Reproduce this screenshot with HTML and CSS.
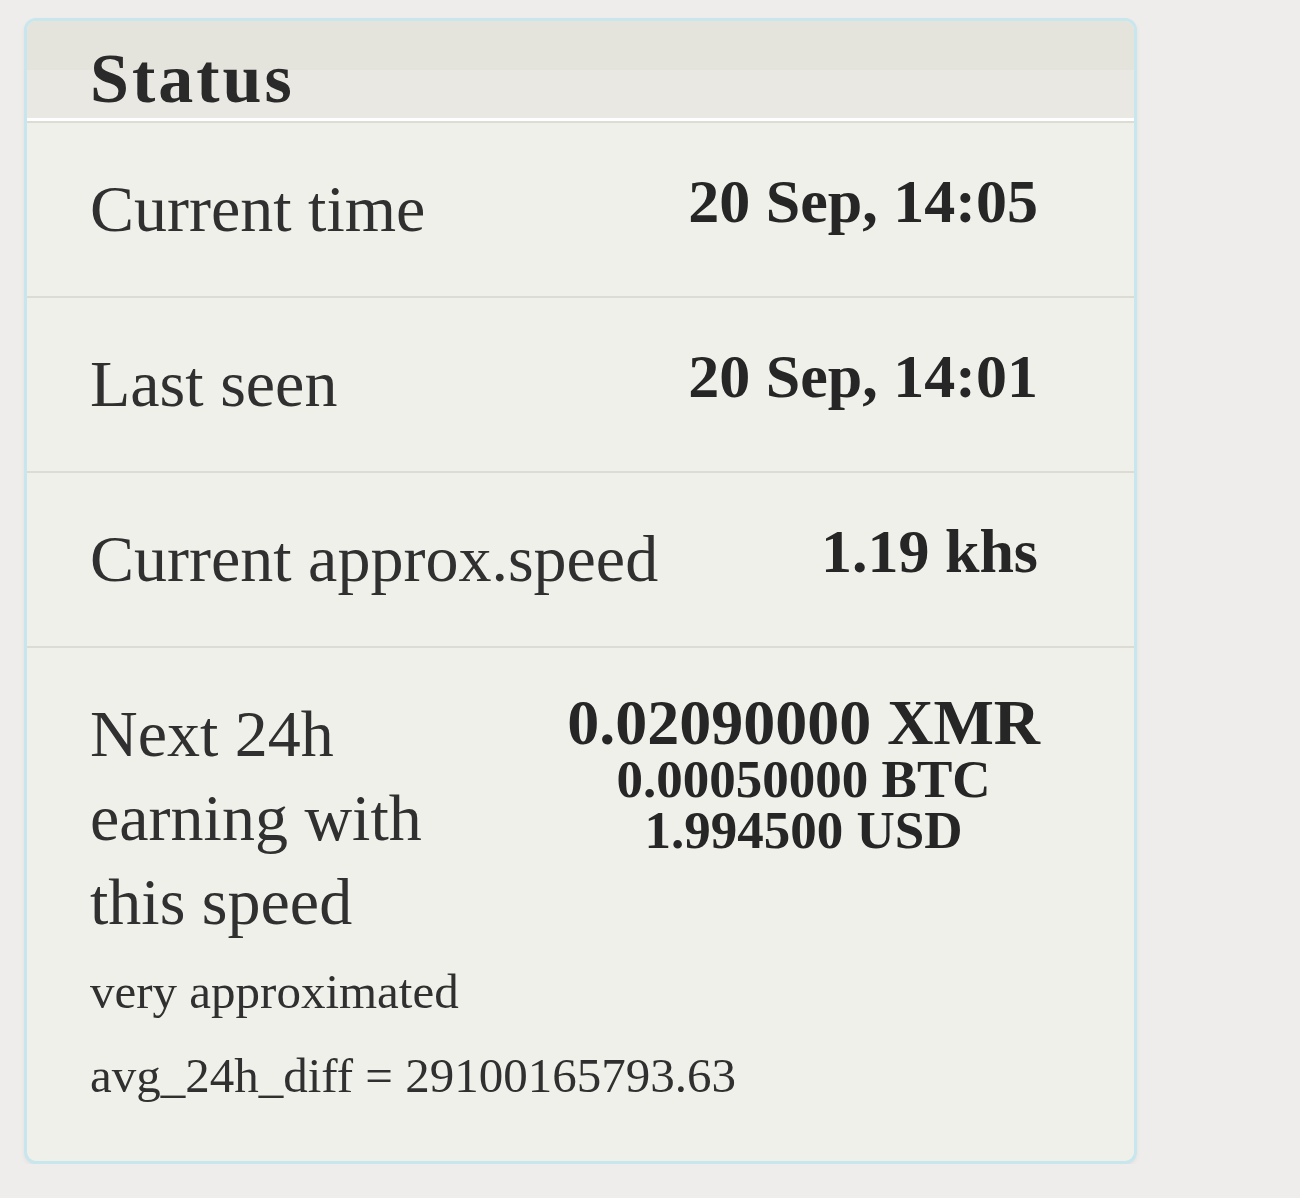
FILE: index.html
```html
<!DOCTYPE html>
<html>
<head>
<meta charset="utf-8">
<link rel="stylesheet" href="styles.css">
</head>
<body>
<div class="card">
  <div class="card-head">Status</div>
  <div class="row">
    <div class="label">Current time</div>
    <div class="value">20 Sep, 14:05</div>
  </div>
  <div class="row">
    <div class="label">Last seen</div>
    <div class="value">20 Sep, 14:01</div>
  </div>
  <div class="row">
    <div class="label">Current approx.speed</div>
    <div class="value">1.19 khs</div>
  </div>
  <div class="row row-last">
    <div class="label label-wide">
      <div class="wrap">Next 24h earning with this speed</div>
      <div class="small first">very approximated</div>
      <div class="small">avg_24h_diff = 29100165793.63</div>
    </div>
    <div class="value">
      <div class="earn">
        <div class="xmr">0.02090000 XMR</div>
        <div class="sub">0.00050000 BTC</div>
        <div class="sub">1.994500 USD</div>
      </div>
    </div>
  </div>
</div>
</body>
</html>
```
FILE: styles.css
```css
html, body {
  margin: 0;
  padding: 0;
  background: #eeedeb;
}
body {
  padding: 18px 0 0 24px;
  font-family: "Liberation Serif", "Times New Roman", serif;
  color: #303030;
}
.card {
  width: 1113px;
  box-sizing: border-box;
  border: 3px solid #c8e6ee;
  border-radius: 12px;
  background: #f0f0eb;
  overflow: hidden;
  box-shadow: 0 2px 4px rgba(0,0,0,0.05);
}
.card-head {
  height: 100px;
  box-sizing: border-box;
  padding: 23px 0 0 63px;
  font-weight: bold;
  font-size: 70px;
  line-height: 70px;
  letter-spacing: 3px;
  color: #2a2a2a;
  background: linear-gradient(#e4e3dc 0, #e4e3dc 49px, #e9e8e2 49px, #e9e8e2 97px, #ffffff 97px);
}
.row {
  display: flex;
  justify-content: space-between;
  align-items: flex-start;
  padding: 44px 96px 45px 63px;
  border-top: 2px solid #dcdbd4;
}
.label {
  font-size: 66px;
  line-height: 84px;
  color: #303030;
}
.label-wide {
  flex: 0 0 430px;
  min-width: 0;
}
.value {
  font-weight: bold;
  font-size: 62px;
  line-height: 68px;
  color: #262626;
  text-align: right;
  white-space: nowrap;
  flex-shrink: 0;
}
.row-last {
  padding-bottom: 43px;
}
.wrap {
  width: 430px;
}
.small {
  font-size: 49px;
  line-height: 84px;
  white-space: nowrap;
}
.small.first {
  margin-top: 6px;
}
.earn {
  display: inline-block;
  text-align: center;
  margin-right: -2px;
}
.xmr {
  font-size: 64px;
  line-height: 62px;
}
.sub {
  font-size: 53px;
  line-height: 51px;
}
```
